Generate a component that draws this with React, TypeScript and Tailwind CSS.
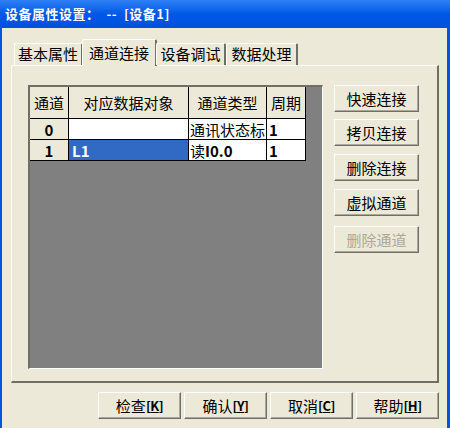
import React from 'react';

const FONT = { fontFamily: '"Noto Sans CJK SC", "Liberation Sans", sans-serif' };

const tabs = [
  { label: '基本属性', w: 'w-[69px]' },
  { label: '通道连接', w: 'w-[75px]', active: true },
  { label: '设备调试', w: 'w-[70px]' },
  { label: '数据处理', w: 'w-[72px]' },
];

const sideButtons = [
  { label: '快速连接', mt: 'mt-0' },
  { label: '拷贝连接', mt: 'mt-[7px]' },
  { label: '删除连接', mt: 'mt-[8px]' },
  { label: '虚拟通道', mt: 'mt-[8px]' },
  { label: '删除通道', mt: 'mt-[10px]', disabled: true },
];

const footerButtons = [
  { label: '检查', key: 'K' },
  { label: '确认', key: 'Y' },
  { label: '取消', key: 'C' },
  { label: '帮助', key: 'H' },
];

const XpButton = ({ children, disabled, className = '' }: { children: React.ReactNode; disabled?: boolean; className?: string }) => (
  <div
    className={`flex items-center justify-center bg-[#ece9d8] border border-t-white border-l-white border-r-[#716f64] border-b-[#716f64] shadow-[inset_-1px_-1px_0_#aca899] text-[15px] leading-none ${
      disabled ? 'text-[#aca899]' : 'text-black'
    } ${className}`}
  >
    {children}
  </div>
);

const Cell = ({ children, className = '' }: { children?: React.ReactNode; className?: string }) => (
  <div className={`flex items-center overflow-hidden whitespace-nowrap text-[15px] leading-none ${className}`}>{children}</div>
);

export default function App() {
  return (
    <div className="w-[450px] h-[428px] flex flex-col bg-[#ece9d8] overflow-hidden" style={FONT}>
      {/* title bar */}
      <div className="h-[28px] shrink-0 flex items-center pl-[5px] bg-gradient-to-b from-[#2d80f4] via-[#0058e6] to-[#0050dc]">
        <span className="text-white text-[13px] font-bold whitespace-pre tracking-[0.5px]">设备属性设置：  --  [设备1]</span>
      </div>

      {/* body */}
      <div className="flex-1 flex flex-col border-l-2 border-r-[3px] border-[#0055e5] pl-[9px] pt-[10px]">
        {/* tab strip */}
        <div className="flex items-end h-[27px] pl-[3px] relative z-10">
          {tabs.map(t =>
            t.active ? (
              <div
                key={t.label}
                className={`${t.w} h-[27px] -mb-[1px] flex items-center justify-center bg-[#ece9d8] border-t border-l border-white border-r-2 border-r-[#716f64] rounded-t-[2px] text-[15px] -mx-[1px]`}
              >
                {t.label}
              </div>
            ) : (
              <div
                key={t.label}
                className={`${t.w} h-[22px] flex items-center justify-center bg-[#ece9d8] border-t border-l border-white border-r-2 border-r-[#716f64] rounded-t-[2px] text-[15px]`}
              >
                {t.label}
              </div>
            )
          )}
        </div>

        {/* tab panel */}
        <div className="w-[428px] h-[318px] border-t border-l border-white border-r-2 border-r-[#716f64] border-b-2 border-b-[#716f64] flex pt-[19px] pl-[16px]">
          {/* grid */}
          <div className="w-[295px] h-[284px] border-t-2 border-l-2 border-t-[#716f64] border-l-[#716f64] border-b border-r border-b-white border-r-white bg-[#808080] flex flex-col items-start">
            <div className="grid grid-cols-[38px_119px_77px_38px] grid-rows-[31px_20px_20px] gap-px bg-black border-r border-b border-black">
              <Cell className="bg-[#ece9d8] justify-center">通道</Cell>
              <Cell className="bg-[#ece9d8] justify-center">对应数据对象</Cell>
              <Cell className="bg-[#ece9d8] justify-center">通道类型</Cell>
              <Cell className="bg-[#ece9d8] justify-center">周期</Cell>

              <Cell className="bg-[#ece9d8] justify-center font-bold">0</Cell>
              <Cell className="bg-white" />
              <Cell className="bg-white pl-[1px]">通讯状态标</Cell>
              <Cell className="bg-white pl-[2px] font-bold">1</Cell>

              <Cell className="bg-[#ece9d8] justify-center font-bold">1</Cell>
              <Cell className="bg-[#316ac5] text-white font-bold pl-[3px]">L1</Cell>
              <Cell className="bg-white pl-[1px]">
                读<span className="font-bold">I0.0</span>
              </Cell>
              <Cell className="bg-white pl-[2px] font-bold">1</Cell>
            </div>
          </div>

          {/* side buttons */}
          <div className="flex flex-col ml-[11px]">
            {sideButtons.map(b => (
              <XpButton key={b.label} disabled={b.disabled} className={`w-[85px] h-[27px] ${b.mt}`}>
                {b.label}
              </XpButton>
            ))}
          </div>
        </div>

        {/* footer buttons */}
        <div className="flex justify-end gap-[3px] w-[428px] mt-[9px]">
          {footerButtons.map(b => (
            <XpButton key={b.key} className="w-[83px] h-[27px]">
              {b.label}
              <span className="font-bold text-[13px] tracking-[-0.5px]">
                [<span className="underline">{b.key}</span>]
              </span>
            </XpButton>
          ))}
        </div>
      </div>
    </div>
  );
}
